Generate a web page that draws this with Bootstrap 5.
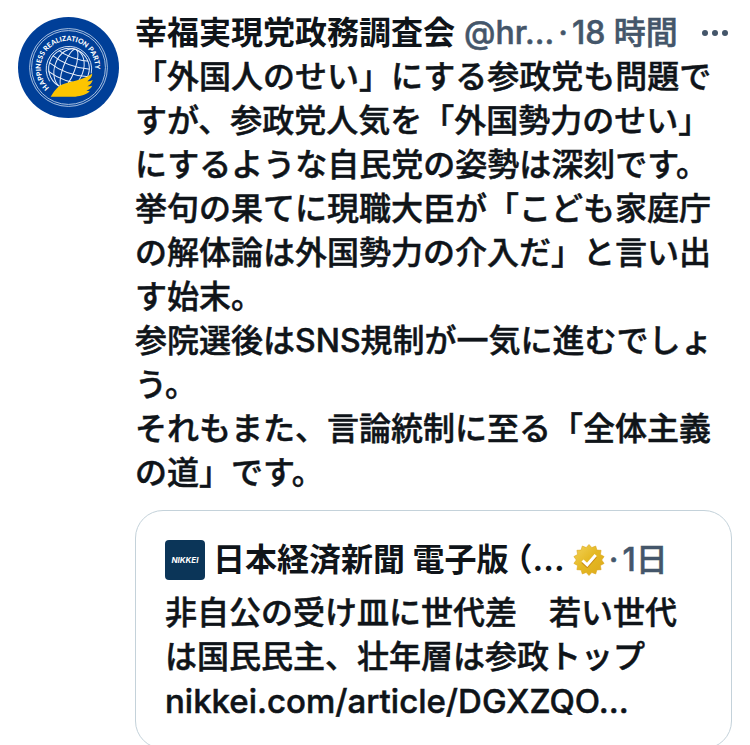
<!DOCTYPE html>
<html lang="ja">
<head>
<meta charset="utf-8">
<meta name="viewport" content="width=device-width, initial-scale=1">
<title>幸福実現党政務調査会</title>
<link href="https://cdn.jsdelivr.net/npm/bootstrap@5.3.0/dist/css/bootstrap.min.css" rel="stylesheet">
<style>
  body { font-family: Inter, "Noto Sans CJK JP", sans-serif; font-size: 32px; line-height: 44px; font-weight: 500; color: #0f1419; background: #fff; }
  .viewport { height: 100vh; }
  .post { padding: 11px 18px 0; gap: 16px; }
  .avatar { width: 101px; height: 101px; margin-top: 6px; }
  .muted { color: #44566a; -webkit-text-stroke: 0.5px #44566a; }
  .head { gap: 9px; padding-right: 3px; }
  .meta { gap: 4px; }
  .dots { color: #44566a; line-height: 0; }
  .post-text { white-space: pre-line; -webkit-text-stroke: 0.5px #0f1419; }
  .quote { border: 1px solid #c4d2da; border-radius: 28px; margin-top: 15px; padding: 27px 29px 24px; }
  .quote-head { gap: 8px; }
  .half { font-feature-settings: "halt"; margin-left: 8px; }
  .since { gap: 4px; margin-left: -4px; }
  .quote-text { margin-top: 9px; -webkit-text-stroke: 0.5px #0f1419; }
  .source { font-size: 33px; }
  .ring-label { font: 900 7px Lato, sans-serif; fill: #fff; }
  .brand-label { font: italic 700 8px Inter, sans-serif; fill: #fff; }
</style>
</head>
<body>
<main class="viewport overflow-hidden">
  <article class="post d-flex align-items-start">
    <svg class="avatar flex-shrink-0" viewBox="0 0 102 102" role="img" aria-label="Happiness Realization Party">
      <defs>
        <path id="ringPath" d="M31.500 71.500 A27.500 27.500 0 1 1 75 64"/>
        <clipPath id="globeClip"><circle cx="51.5" cy="52" r="21"/></clipPath>
      </defs>
      <circle cx="51" cy="51" r="51" fill="#003f98"/>
      <g fill="none" stroke="#d3e0f2">
        <circle cx="51" cy="51" r="39.3" stroke-width="0.8"/>
        <circle cx="51" cy="51" r="37.3" stroke-width="0.8"/>
        <path d="M32 65 A23 23 0 1 1 74 57" stroke-width="1"/>
        <g stroke-width="1" stroke="#e6eefa" transform="rotate(20 51.5 52)">
          <circle cx="51.5" cy="52" r="20.5"/>
          <ellipse cx="51.5" cy="52" rx="14.5" ry="20.5"/>
          <ellipse cx="51.5" cy="52" rx="6" ry="20.5"/>
          <g clip-path="url(#globeClip)">
            <path d="M31 37 Q51.5 44 72 37 M30 45 Q51.5 52 73 45 M30 53 Q51.5 60 73 53 M30 61 Q51.5 68 73 61"/>
          </g>
        </g>
      </g>
      <path fill="#fdc500" d="M33 80.5 C36 76 39 71 44 68.5 C53 64.5 65 64.500 75 57 C75 60 73 62.500 70 65 C72 65 74 64 75.500 63.500 C74.500 67 72.500 68.500 70 70 C72 70 73.500 70 75 69.500 C73.500 72.500 71.500 73.500 69 74.500 L72.500 75 C69 78.500 64 79.500 58 80.500 Z"/>
      <text class="ring-label"><textPath href="#ringPath">HAPPINESS REALIZATION PARTY</textPath></text>
    </svg>
    <div class="flex-grow-1">
      <header class="head d-flex align-items-center">
        <span class="fw-bold">幸福実現党政務調査会</span>
        <span class="meta muted d-flex"><span>@hr...</span><span>·</span><span>18 時間</span></span>
        <button type="button" class="dots btn p-0 border-0 ms-auto" aria-label="More"><svg width="28" height="8" viewBox="0 0 28 8" fill="currentColor"><circle cx="4" cy="4" r="3"/><circle cx="14" cy="4" r="3"/><circle cx="24" cy="4" r="3"/></svg></button>
      </header>
      <p class="post-text mb-0">「外国人のせい」にする参政党も問題ですが、参政党人気を「外国勢力のせい」にするような自民党の姿勢は深刻です。
挙句の果てに現職大臣が「こども家庭庁の解体論は外国勢力の介入だ」と言い出す始末。
参院選後はSNS規制が一気に進むでしょう。
それもまた、言論統制に至る「全体主義の道」です。</p>
      <section class="quote">
        <div class="quote-head d-flex align-items-center">
          <svg class="flex-shrink-0" width="40" height="40" viewBox="0 0 40 40" role="img" aria-label="Nikkei"><rect width="40" height="40" rx="4" fill="#0b3558"/><text class="brand-label" x="20" y="23" text-anchor="middle">NIKKEI</text></svg>
          <span class="fw-bold">日本経済新聞 電子版<span class="half">（</span>...</span>
          <svg class="flex-shrink-0" width="32" height="32" viewBox="0 0 32 32" role="img" aria-label="Verified">
            <defs><linearGradient id="gold" x1="0" y1="0" x2="1" y2="1"><stop offset="0" stop-color="#f3d35b"/><stop offset="0.5" stop-color="#e4b822"/><stop offset="1" stop-color="#dda91a"/></linearGradient></defs>
            <path fill="url(#gold)" stroke="#dca620" stroke-width="0.6" stroke-linejoin="round" d="M16 .5 18.800 3.600 22.700 2 23.900 6.100 28.100 6.300 27.400 10.500 31.100 12.600 28.700 16 31.100 19.400 27.400 21.500 28.100 25.700 23.900 25.900 22.700 30 18.800 28.400 16 31.500 13.200 28.400 9.300 30 8.100 25.900 3.900 25.700 4.600 21.500 .9 19.400 3.300 16 .9 12.600 4.600 10.500 3.900 6.300 8.100 6.100 9.300 2 13.200 3.600Z"/>
            <path d="M9.500 17.800 14.200 22.200 22.700 12.500" fill="none" stroke="#c98a12" stroke-width="3"/>
            <path d="M9.500 16.500 14.200 20.800 22.700 11" fill="none" stroke="#fff" stroke-width="3"/>
          </svg>
          <span class="since muted d-flex"><span>·</span><span>1日</span></span>
        </div>
        <p class="quote-text mb-0">非自公の受け皿に世代差　若い世代は国民民主、壮年層は参政トップ <a class="source text-reset text-decoration-none" href="https://nikkei.com/">nikkei.com/article/DGXZQO...</a></p>
      </section>
    </div>
  </article>
</main>
<script src="https://cdn.jsdelivr.net/npm/bootstrap@5.3.0/dist/js/bootstrap.bundle.min.js"></script>
</body>
</html>
